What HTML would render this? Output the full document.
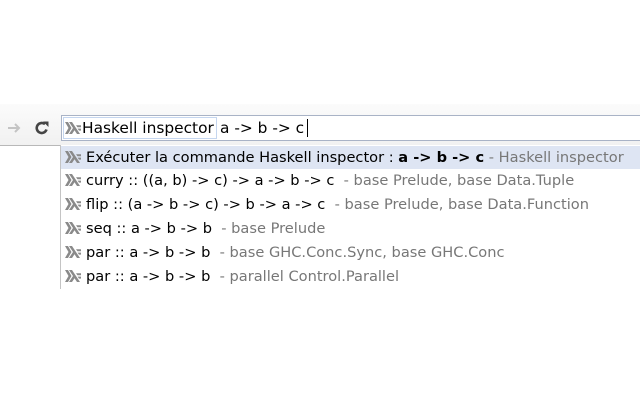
<!DOCTYPE html>
<html><head><meta charset="utf-8"><style>
body{margin:0;width:640px;height:400px;background:#fff;position:relative;overflow:hidden;font-family:"DejaVu Sans","Liberation Sans",sans-serif;}
.tb{position:absolute;left:0;top:104px;width:640px;height:41px;background:linear-gradient(#fbfbfb,#f1f1f1);border-bottom:1px solid #b8b8b8;}
.omni{position:absolute;left:61px;top:115px;width:585px;height:26px;background:#fff;border:1px solid #a9b3c6;box-sizing:border-box;}
.chip{position:absolute;left:63px;top:117px;width:154px;height:22px;border:1px solid #c5d6ef;box-sizing:border-box;background:#fff;}
.txt{position:absolute;font-size:15.4px;color:#000;white-space:pre;line-height:20px;}
.drop{position:absolute;left:60px;top:145px;width:590px;height:144px;border-left:1px solid #c4c4c4;background:#fff;}
.row{position:absolute;left:61px;width:580px;height:23px;font-size:14.6px;white-space:pre;line-height:23px;}
.row span.g{color:#777;}
.row .t{position:absolute;left:25px;top:0;}
.ic{position:absolute;left:4px;top:5px;}
.hl{background:#dee5f3;}
</style></head><body>
<div class="tb"></div>
<svg style="position:absolute;left:6px;top:120px" width="16" height="16" viewBox="0 0 16 16"><path d="M2 8h11M9 4l4 4-4 4" stroke="#c4c4c4" stroke-width="2" fill="none"/></svg>
<svg style="position:absolute;left:34px;top:120px" width="16" height="16" viewBox="0 0 16 16"><path d="M12.5 9.5A5 5 0 1 1 11 4.2" stroke="#454545" stroke-width="2.6" fill="none"/><path d="M9 1.5h5.5V7z" fill="#454545"/></svg>
<div class="omni"></div>
<div class="chip"></div>
<svg style="position:absolute;left:65px;top:122px" width="16" height="12" viewBox="0 0 16 12"><g fill="#8a8a8a"><path d="M0 0h3l3.5 6L3 12H0l3.5-6z"/><path d="M4 0h3l8 12h-3l-2.5-3.8L7 12H4l4-6z"/><path d="M11 3.3h5v2h-3.6zM12.6 6.6H16v2h-2z"/></g></svg>
<div class="txt" style="left:82px;top:118px">Haskell inspector</div>
<div class="txt" style="left:220px;top:118px">a -&gt; b -&gt; c</div>
<div style="position:absolute;left:307px;top:119px;width:1px;height:18px;background:#000"></div>
<div class="drop"></div>
<div class="row hl" style="top:146px"><svg class="ic" width="16" height="12" viewBox="0 0 16 12"><g fill="#8a8a8a"><path d="M0 0h3l3.5 6L3 12H0l3.5-6z"/><path d="M4 0h3l8 12h-3l-2.5-3.8L7 12H4l4-6z"/><path d="M11 3.3h5v2h-3.6zM12.6 6.6H16v2h-2z"/></g></svg><span class="t">Exécuter la commande Haskell inspector : <b>a -&gt; b -&gt; c</b> <span class="g">- Haskell inspector</span></span></div>
<div class="row" style="top:169px"><svg class="ic" width="16" height="12" viewBox="0 0 16 12"><g fill="#8a8a8a"><path d="M0 0h3l3.5 6L3 12H0l3.5-6z"/><path d="M4 0h3l8 12h-3l-2.5-3.8L7 12H4l4-6z"/><path d="M11 3.3h5v2h-3.6zM12.6 6.6H16v2h-2z"/></g></svg><span class="t">curry :: ((a, b) -&gt; c) -&gt; a -&gt; b -&gt; c  <span class="g">- base Prelude, base Data.Tuple</span></span></div>
<div class="row" style="top:193px"><svg class="ic" width="16" height="12" viewBox="0 0 16 12"><g fill="#8a8a8a"><path d="M0 0h3l3.5 6L3 12H0l3.5-6z"/><path d="M4 0h3l8 12h-3l-2.5-3.8L7 12H4l4-6z"/><path d="M11 3.3h5v2h-3.6zM12.6 6.6H16v2h-2z"/></g></svg><span class="t">flip :: (a -&gt; b -&gt; c) -&gt; b -&gt; a -&gt; c  <span class="g">- base Prelude, base Data.Function</span></span></div>
<div class="row" style="top:217px"><svg class="ic" width="16" height="12" viewBox="0 0 16 12"><g fill="#8a8a8a"><path d="M0 0h3l3.5 6L3 12H0l3.5-6z"/><path d="M4 0h3l8 12h-3l-2.5-3.8L7 12H4l4-6z"/><path d="M11 3.3h5v2h-3.6zM12.6 6.6H16v2h-2z"/></g></svg><span class="t">seq :: a -&gt; b -&gt; b  <span class="g">- base Prelude</span></span></div>
<div class="row" style="top:241px"><svg class="ic" width="16" height="12" viewBox="0 0 16 12"><g fill="#8a8a8a"><path d="M0 0h3l3.5 6L3 12H0l3.5-6z"/><path d="M4 0h3l8 12h-3l-2.5-3.8L7 12H4l4-6z"/><path d="M11 3.3h5v2h-3.6zM12.6 6.6H16v2h-2z"/></g></svg><span class="t">par :: a -&gt; b -&gt; b  <span class="g">- base GHC.Conc.Sync, base GHC.Conc</span></span></div>
<div class="row" style="top:265px"><svg class="ic" width="16" height="12" viewBox="0 0 16 12"><g fill="#8a8a8a"><path d="M0 0h3l3.5 6L3 12H0l3.5-6z"/><path d="M4 0h3l8 12h-3l-2.5-3.8L7 12H4l4-6z"/><path d="M11 3.3h5v2h-3.6zM12.6 6.6H16v2h-2z"/></g></svg><span class="t">par :: a -&gt; b -&gt; b  <span class="g">- parallel Control.Parallel</span></span></div>
</body></html>
